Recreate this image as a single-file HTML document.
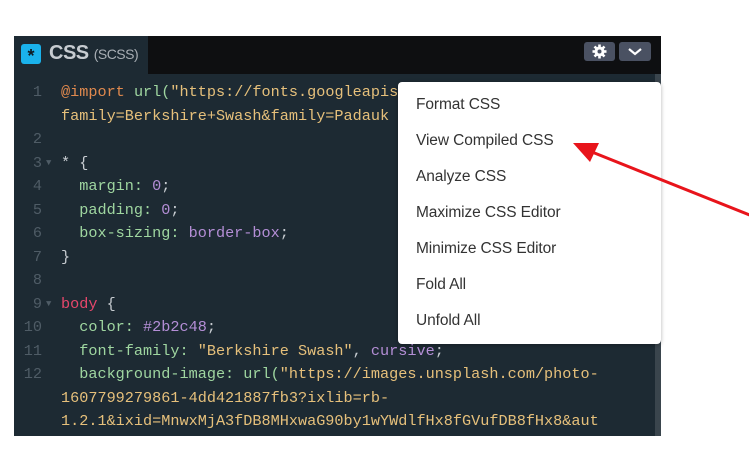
<!DOCTYPE html>
<html><head><style>
body{margin:0;width:749px;height:455px;background:#fff;position:relative;overflow:hidden;font-family:"Liberation Sans",sans-serif}
.panel{position:absolute;left:14px;top:36px;width:647px;height:400px;background:#1d2a33}
.hdr{position:absolute;left:0;top:0;width:647px;height:38px;background:#0e0f11}
.tab{position:absolute;left:0;top:0;width:134px;height:38px;background:#1d2a33}
.ic{position:absolute;left:7px;top:8px;width:20px;height:20px;background:#1ab2ec;border-radius:3px;color:#0e1a22;font-size:18px;line-height:24px;text-align:center;font-weight:bold}
.tt{position:absolute;left:35px;top:6px;color:#c7ccd1;font-size:20px;font-weight:bold;letter-spacing:-0.5px}
.tt span{font-size:14px;font-weight:normal;color:#a8aeb4}
.btn{position:absolute;top:6px;height:19px;background:#4a5162;border-radius:3px}
.code{position:absolute;left:0;top:45px;font-family:"Liberation Mono",monospace;font-size:15.2px;line-height:23.5px;white-space:pre;color:#9fd6a0}
.ln{position:absolute;left:0;width:28px;text-align:right;color:#4f5c66}
.fm{position:absolute;left:32px;color:#4f5c66;font-size:9px}
.l{position:absolute;left:47px}
.o{color:#e0894e}.y{color:#e6c07b}.g{color:#9fd6a0}.p{color:#b48ed6}.r{color:#e5476b}.w{color:#c7ccd1}
.sb{position:absolute;right:0;top:38px;width:6px;height:362px;background:#3a454d}
.menu{position:absolute;left:398px;top:82px;width:263px;height:262px;background:#fff;border-radius:4px;box-shadow:0 1px 4px rgba(0,0,0,.3)}
.menu div{position:absolute;left:18px;font-size:15.5px;color:#333;letter-spacing:-0.1px}
</style></head><body>
<div class="panel">
<div class="hdr"><div class="tab"><div class="ic">*</div><div class="tt">CSS <span>(SCSS)</span></div></div>
<div class="btn" style="left:570px;width:31px"><svg width="31" height="19"><g transform="translate(15.5 9.5)" fill="#fff"><circle r="5"/><g stroke="#fff" stroke-width="2.6"><line x1="0" y1="-7" x2="0" y2="7"/><line x1="-7" y1="0" x2="7" y2="0"/><line x1="-5" y1="-5" x2="5" y2="5"/><line x1="-5" y1="5" x2="5" y2="-5"/></g><circle r="2" fill="#4a5162"/></g></svg></div>
<div class="btn" style="left:605px;width:32px"><svg width="32" height="19"><path d="M10 7l6 5 6-5" stroke="#fff" stroke-width="2.2" fill="none"/></svg></div>
</div>
<div class="sb"></div>
<div class="code">
<div class="ln" style="top:0">1</div><div class="l" style="top:0"><span class="o">@import</span> <span class="g">url(</span><span class="y">"https://fonts.googleapis.com/css2?</span></div>
<div class="l" style="top:23.5px"><span class="y">family=Berkshire+Swash&amp;family=Padauk</span></div>
<div class="ln" style="top:47px">2</div>
<div class="ln" style="top:70.5px">3</div><div class="fm" style="top:70.5px">▼</div><div class="l" style="top:70.5px"><span class="w">* {</span></div>
<div class="ln" style="top:94px">4</div><div class="l" style="top:94px">  margin: <span class="p">0</span><span class="w">;</span></div>
<div class="ln" style="top:117.5px">5</div><div class="l" style="top:117.5px">  padding: <span class="p">0</span><span class="w">;</span></div>
<div class="ln" style="top:141px">6</div><div class="l" style="top:141px">  box-sizing: <span class="p">border-box</span><span class="w">;</span></div>
<div class="ln" style="top:164.5px">7</div><div class="l" style="top:164.5px"><span class="w">}</span></div>
<div class="ln" style="top:188px">8</div>
<div class="ln" style="top:211.5px">9</div><div class="fm" style="top:211.5px">▼</div><div class="l" style="top:211.5px"><span class="r">body</span> <span class="w">{</span></div>
<div class="ln" style="top:235px">10</div><div class="l" style="top:235px">  color: <span class="p">#2b2c48</span><span class="w">;</span></div>
<div class="ln" style="top:258.5px">11</div><div class="l" style="top:258.5px">  font-family: <span class="y">"Berkshire Swash"</span><span class="w">,</span> <span class="p">cursive</span><span class="w">;</span></div>
<div class="ln" style="top:282px">12</div><div class="l" style="top:282px">  background-image: url(<span class="y">"https://images.unsplash.com/photo-</span></div>
<div class="l" style="top:305.5px"><span class="y">1607799279861-4dd421887fb3?ixlib=rb-</span></div>
<div class="l" style="top:329px"><span class="y">1.2.1&amp;ixid=MnwxMjA3fDB8MHxwaG90by1wYWdlfHx8fGVufDB8fHx8&amp;aut</span></div>
</div>
</div>
<div class="menu">
<div style="top:14px">Format CSS</div>
<div style="top:50px">View Compiled CSS</div>
<div style="top:86px">Analyze CSS</div>
<div style="top:122px">Maximize CSS Editor</div>
<div style="top:158px">Minimize CSS Editor</div>
<div style="top:194px">Fold All</div>
<div style="top:230px">Unfold All</div>
</div>
<svg style="position:absolute;left:0;top:0" width="749" height="455"><line x1="752" y1="216" x2="592" y2="152" stroke="#e8141b" stroke-width="3"/><path d="M573 143l26 0-9 19z" fill="#e8141b"/></svg>
</body></html>
